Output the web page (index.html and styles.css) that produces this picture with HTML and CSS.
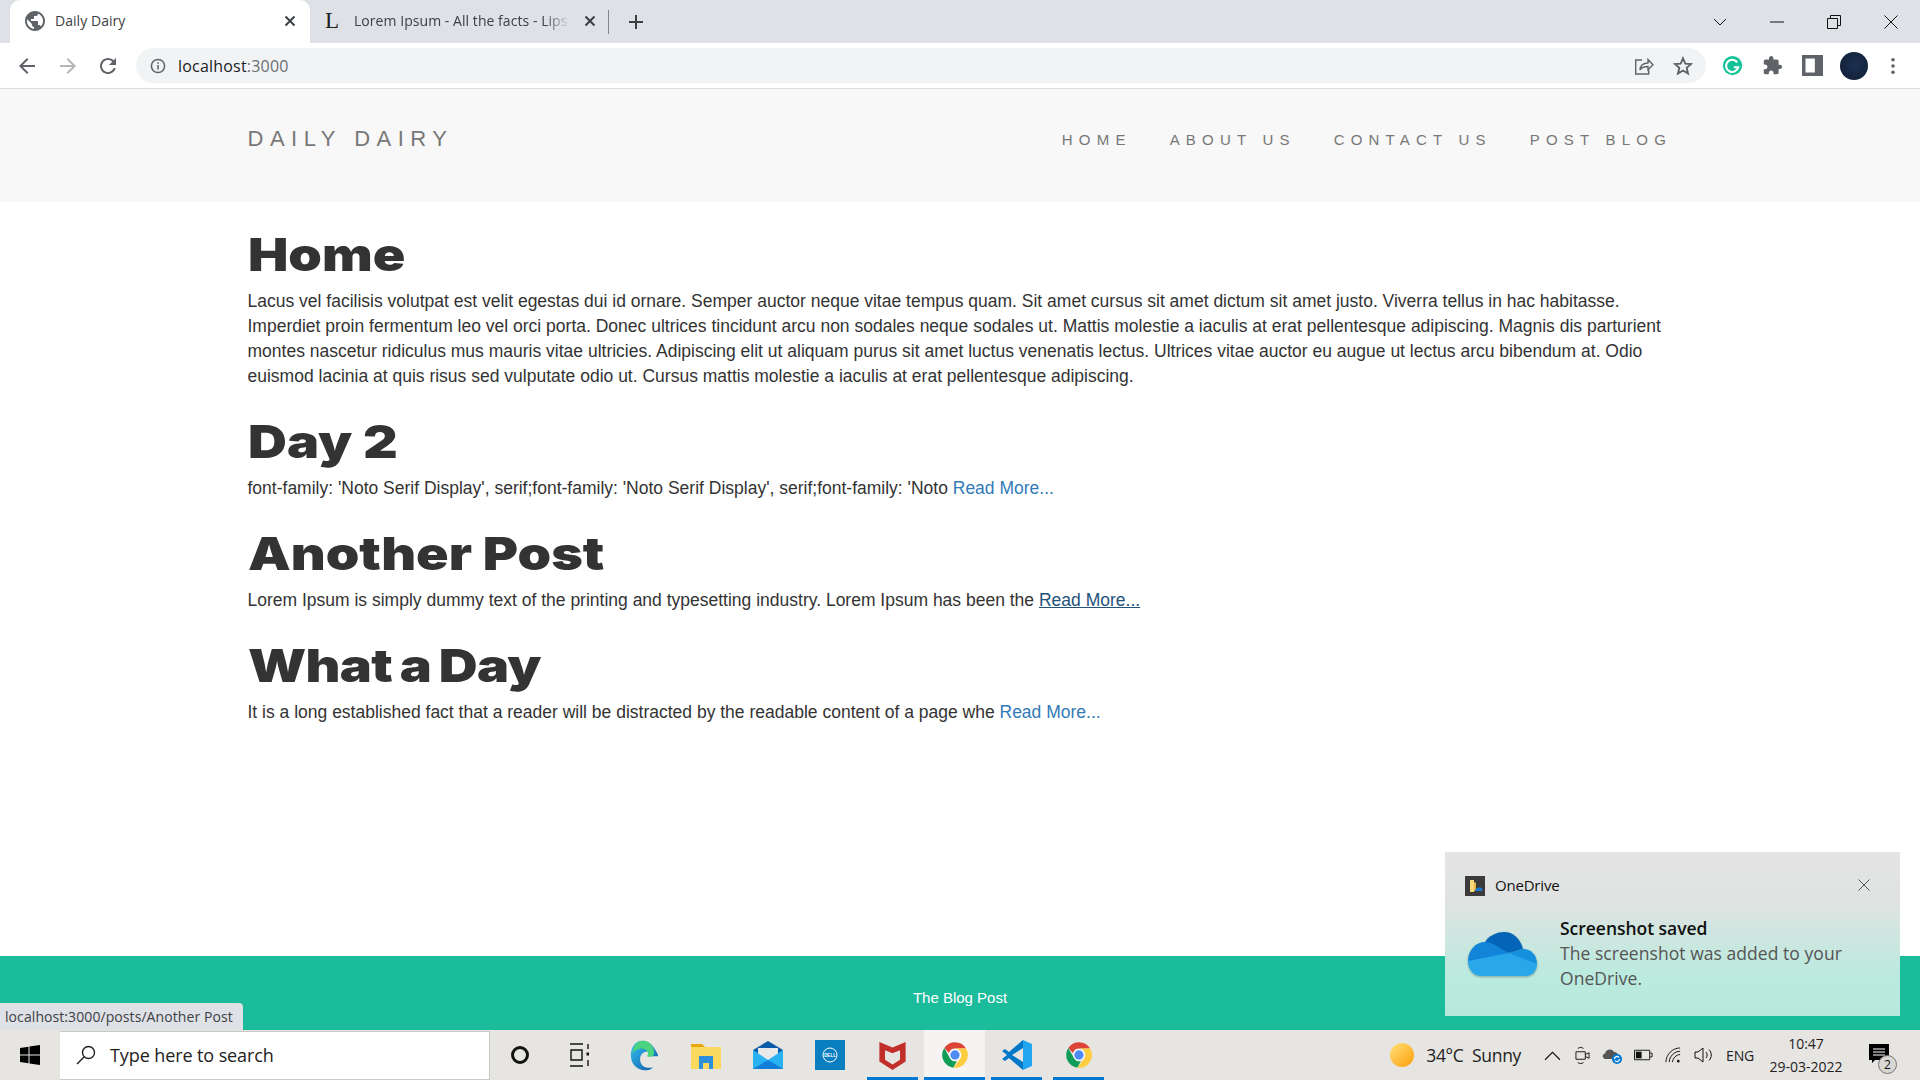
FILE: index.html

```html
<!DOCTYPE html>
<html lang="en">
<head>
  <meta charset="UTF-8">
  <title>Daily Dairy</title>
  <link rel="stylesheet" href="styles.css">
</head>
<body>
  <svg class="defs" width="0" height="0">
    <symbol id="chrome" viewBox="0 0 48 48">
      <path fill="#db4437" d="M24 2a22 22 0 0 1 19 11H24a11 11 0 0 0-10.400 7.400L5.600 12A22 22 0 0 1 24 2z"/>
      <path fill="#0f9d58" d="M5.600 12l9.500 16.500A11 11 0 0 0 27 34.600L21 45.800A22 22 0 0 1 5.600 12z"/>
      <path fill="#ffcd40" d="M43 13a22 22 0 0 1-22 32.800L33.500 29.500A11 11 0 0 0 24 13z"/>
      <circle cx="24" cy="24" r="10" fill="#fff"/>
      <circle cx="24" cy="24" r="8" fill="#4e8bf5"/>
    </symbol>
  </svg>

  <div class="tabstrip">
    <div class="tab tab-active">
      <svg class="tab-icon" viewBox="2 2 20 20"><path fill="#5f6368" d="M12 2C6.480 2 2 6.480 2 12s4.480 10 10 10 10-4.480 10-10S17.520 2 12 2zm-1 17.930c-3.950-.49-7-3.850-7-7.930 0-.62.08-1.210.21-1.790L9 15v1c0 1.100.9 2 2 2v1.930zm6.900-2.540c-.26-.81-1-1.390-1.900-1.390h-1v-3c0-.55-.45-1-1-1H8v-2h2c.55 0 1-.45 1-1V7h2c1.100 0 2-.9 2-2v-.41c2.930 1.190 5 4.060 5 7.410 0 2.080-.8 3.970-2.100 5.390z"/></svg>
      <span class="tab-title">Daily Dairy</span>
      <svg class="tab-close" viewBox="0 0 12 12"><path d="M1.500 1.500l9 9M10.500 1.500l-9 9"/></svg>
    </div>
    <div class="tab">
      <span class="tab-letter">L</span>
      <span class="tab-title tab-fade">Lorem Ipsum - All the facts - Lips</span>
      <svg class="tab-close" viewBox="0 0 12 12"><path d="M1.500 1.500l9 9M10.500 1.500l-9 9"/></svg>
    </div>
    <div class="tab-sep"></div>
    <svg class="tab-new" viewBox="0 0 16 16"><path d="M8 1v14M1 8h14"/></svg>
    <div class="window-controls">
      <svg viewBox="0 0 14 14" class="win-chevron"><path d="M1 4l6 6 6-6"/></svg>
      <svg viewBox="0 0 14 14" class="win-min"><path d="M0 7h14"/></svg>
      <svg viewBox="0 0 14 14" class="win-restore"><path d="M.5 3.500h10v10H.5zM3.500 3.500V.5h10v10h-3"/></svg>
      <svg viewBox="0 0 14 14" class="win-close"><path d="M.5.5l13 13M13.500.5l-13 13"/></svg>
    </div>
  </div>

  <div class="toolbar">
    <svg class="tool" viewBox="0 0 24 24"><path fill="#5f6368" d="M20 11H7.830l5.590-5.590L12 4l-8 8 8 8 1.410-1.410L7.830 13H20v-2z"/></svg>
    <svg class="tool" viewBox="0 0 24 24"><path fill="#b4b6b9" d="M20 11H7.830l5.590-5.590L12 4l-8 8 8 8 1.410-1.410L7.830 13H20v-2z" transform="matrix(-1 0 0 1 24 0)"/></svg>
    <svg class="tool" viewBox="0 0 24 24"><path fill="#5f6368" d="M17.650 6.350C16.200 4.900 14.210 4 12 4c-4.420 0-7.990 3.580-7.990 8s3.570 8 7.990 8c3.730 0 6.840-2.550 7.730-6h-2.080c-.82 2.330-3.040 4-5.650 4-3.310 0-6-2.690-6-6s2.690-6 6-6c1.660 0 3.140.69 4.220 1.780L13 11h7V4l-2.350 2.350z"/></svg>
    <div class="omnibox">
      <svg class="omni-info" viewBox="0 0 16 16"><circle cx="8" cy="8" r="6.600" fill="none" stroke="#5f6368" stroke-width="1.500"/><path stroke="#5f6368" stroke-width="1.600" d="M8 7v4.500M8 4.200v1.600"/></svg>
      <span class="omni-url">localhost<span class="omni-port">:3000</span></span>
      <svg class="omni-share" viewBox="0 0 20 20"><path fill="none" stroke="#5f6368" stroke-width="1.400" d="M8 4H1.700v14h13v-4M6 14c.3-4 3-7 8-7V3.500l5 5.300-5 5V10.500c-3.500 0-6.500 1-8 3.500z"/></svg>
      <svg class="omni-star" viewBox="0 0 20 20"><path fill="none" stroke="#5f6368" stroke-width="1.900" d="M10 2.300l2.300 5.300 5.700.5-4.300 3.800 1.300 5.600-5-3-5 3 1.300-5.600L2 8.100l5.700-.5z"/></svg>
    </div>
    <div class="ext-icons">
      <svg class="ext" viewBox="0 0 24 24"><circle cx="12" cy="12" r="11" fill="#15c39a"/><path fill="none" stroke="#fff" stroke-width="2.400" d="M17.500 8.500A7 7 0 1 0 18.500 14h-5"/></svg>
      <svg class="ext" viewBox="0 0 24 24"><path fill="#5f6368" d="M20.500 11H19V7c0-1.100-.9-2-2-2h-4V3.500C13 2.120 11.880 1 10.500 1S8 2.120 8 3.500V5H4c-1.100 0-1.990.9-1.990 2v3.800H3.500c1.490 0 2.700 1.210 2.700 2.700s-1.210 2.700-2.700 2.700H2V20c0 1.100.9 2 2 2h3.800v-1.500c0-1.490 1.210-2.700 2.700-2.700 1.490 0 2.700 1.210 2.700 2.700V22H17c1.100 0 2-.9 2-2v-4h1.500c1.380 0 2.500-1.120 2.500-2.500S21.880 11 20.500 11z"/></svg>
      <svg class="ext" viewBox="0 0 18 18"><path fill="#5f6368" fill-rule="evenodd" d="M0 0h18v18H0zM3 3v12h8V3z"/></svg>
      <div class="avatar"></div>
      <svg class="ext-dots" viewBox="0 0 6 20"><circle cx="3" cy="3" r="2"/><circle cx="3" cy="10" r="2"/><circle cx="3" cy="17" r="2"/></svg>
    </div>
  </div>

  <div class="page">
    <nav class="navbar">
      <a class="brand">DAILY DAIRY</a>
      <ul class="nav-links">
        <li>HOME</li>
        <li>ABOUT US</li>
        <li>CONTACT US</li>
        <li>POST BLOG</li>
      </ul>
    </nav>

    <main class="container">
      <h1>Home</h1>
      <p>Lacus vel facilisis volutpat est velit egestas dui id ornare. Semper auctor neque vitae tempus quam. Sit amet cursus sit amet dictum sit amet justo. Viverra tellus in hac habitasse. Imperdiet proin fermentum leo vel orci porta. Donec ultrices tincidunt arcu non sodales neque sodales ut. Mattis molestie a iaculis at erat pellentesque adipiscing. Magnis dis parturient montes nascetur ridiculus mus mauris vitae ultricies. Adipiscing elit ut aliquam purus sit amet luctus venenatis lectus. Ultrices vitae auctor eu augue ut lectus arcu bibendum at. Odio euismod lacinia at quis risus sed vulputate odio ut. Cursus mattis molestie a iaculis at erat pellentesque adipiscing.</p>

      <h1>Day 2</h1>
      <p>font-family: 'Noto Serif Display', serif;font-family: 'Noto Serif Display', serif;font-family: 'Noto <a>Read More...</a></p>

      <h1>Another Post</h1>
      <p>Lorem Ipsum is simply dummy text of the printing and typesetting industry. Lorem Ipsum has been the <a class="hovered">Read More...</a></p>

      <h1 class="tight">What a Day</h1>
      <p>It is a long established fact that a reader will be distracted by the readable content of a page whe <a>Read More...</a></p>
    </main>

    <footer class="footer">The Blog Post</footer>

    <div class="status-bubble">localhost:3000/posts/Another Post</div>

    <div class="toast">
      <div class="toast-head">
        <svg class="toast-app" viewBox="0 0 20 20"><rect width="20" height="20" fill="#3b3b3b"/><path fill="#f5d77a" d="M5 4h4v12H5z"/><path fill="#e8b94a" d="M9 6l2 1v8H9z"/><path fill="#1b78d0" d="M10 15c0-2 1.500-3 3-3 .8-1.300 3.500-1 4 1 1 .2 1 2-.2 2z"/></svg>
        <span class="toast-name">OneDrive</span>
        <svg class="toast-close" viewBox="0 0 12 12"><path d="M.5.5l11 11M11.500.5l-11 11"/></svg>
      </div>
      <div class="toast-body">
        <svg class="toast-cloud" viewBox="0 0 69 44">
          <path fill="#0364b8" d="M16 12C20 3 30 0 36 0c9 0 16 6 19 17L41 21z"/>
          <path fill="#1284da" d="M0 29C0 18 8 10 17 10c5 0 11 3 16 7l8 4L8 38z"/>
          <path fill="#1490df" d="M41 21l14-4c8 0 14 6 14 15L50 38z"/>
          <path fill="#28a8ea" d="M41 21l28 11c0 7-5 12-11 12H14C6 44 0 38 0 29z"/>
        </svg>
        <div class="toast-text">
          <div class="toast-title">Screenshot saved</div>
          <div class="toast-msg">The screenshot was added to your OneDrive.</div>
        </div>
      </div>
    </div>
  </div>

  <div class="taskbar">
    <svg class="tb-start" viewBox="0 0 20 20"><path fill="#000" d="M0 3l8.500-1.200V9.500H0zM9.500 1.600L20 0v9.500H9.500zM0 10.500h8.500v7.700L0 17zM9.500 10.500H20V20L9.500 18.400z"/></svg>
    <div class="tb-search">
      <svg class="tb-glass" viewBox="0 0 20 20"><circle cx="12.500" cy="7.500" r="6" fill="none" stroke="#222" stroke-width="1.400"/><path stroke="#222" stroke-width="1.400" d="M8 12l-7 7"/></svg>
      <span>Type here to search</span>
    </div>
    <div class="tb-slot tb-cortana"><span class="ring"></span></div>
    <div class="tb-slot tb-taskview">
      <svg viewBox="0 0 20 24" width="20" height="24"><path fill="none" stroke="#111" stroke-width="1.400" d="M1 1h13M1 23h13M2 7h11v10H2zM19 1v5M19 17v6"/><rect x="17.500" y="9.500" width="3" height="3" fill="#111"/></svg>
    </div>
    <div class="tb-slot tb-edge">
      <svg viewBox="0 0 32 40" width="31" height="31"><defs><linearGradient id="edgeA" x1="0" y1="0" x2="1" y2="1"><stop offset="0" stop-color="#35c1f1"/><stop offset="1" stop-color="#0c59a4"/></linearGradient></defs><path fill="url(#edgeA)" d="M16 1C7 1 1 9 1 20c0 11 8 19 18 19 4 0 8-1 11-4-6 2-16 1-17-9-1-7 5-12 11-11 4 1 5 4 4 6h9C31 8 25 1 16 1z"/><path fill="#4bd37f" d="M16 1c9 0 15 7 15 16 0 4-5 6-9 4 3-5-1-10-7-10C10 11 5 14 3 18 4 8 9 1 16 1z"/></svg>
    </div>
    <div class="tb-slot tb-files">
      <svg viewBox="0 0 30 28" width="30" height="28"><path fill="#e8a70f" d="M0 3h11l3 3H0z"/><path fill="#fbd95e" d="M0 6h30v22H0z"/><path fill="#2d8fdc" d="M8 15h14v13h-4v-6h-6v6H8z"/></svg>
    </div>
    <div class="tb-slot tb-mail">
      <svg viewBox="0 0 30 28" width="30" height="28"><path fill="#0a5ca8" d="M15 0l15 9v4H0V9z"/><path fill="#e9e9e9" d="M5 7h20v8l-10 6-10-6z"/><path fill="#29b2f2" d="M0 9l15 10 15-10v19H0z"/><path fill="#0f7fd8" d="M0 28l15-9 15 9z"/></svg>
    </div>
    <div class="tb-slot tb-dell">
      <svg viewBox="0 0 30 30" width="30" height="30"><rect width="30" height="30" fill="#0a7fbf"/><circle cx="15" cy="15" r="7" fill="none" stroke="#fff"/><text x="15" y="16.700" text-anchor="middle" class="dell-word">DELL</text></svg>
    </div>
    <div class="tb-slot tb-mcafee tb-open">
      <svg viewBox="0 0 28 32" width="27" height="30"><path fill="#c22f2b" fill-rule="evenodd" d="M0 2l14 6 14-6v21l-14 9-14-9zM6 11v10l8 5 8-5V11l-8 3z"/></svg>
    </div>
    <div class="tb-slot tb-chrome tb-open tb-active"><svg class="tb-chrome-icon"><use href="#chrome"/></svg></div>
    <div class="tb-slot tb-code tb-open">
      <svg viewBox="0 0 30 30" width="30" height="30"><path fill="#22a5f1" d="M21 0l9 4v22l-9 4z"/><path fill="#0078c8" d="M21 0v8L10 15l11 7v8L7 18l-4 3-3-2 5-4-5-4 3-2 4 3z"/></svg>
    </div>
    <div class="tb-slot tb-chrome2 tb-open"><svg class="tb-chrome-icon"><use href="#chrome"/></svg></div>

    <div class="tray">
      <span class="sun"></span>
      <span class="weather">34°C&nbsp; Sunny</span>
      <svg class="tray-icon tray-caret" viewBox="0 0 16 10"><path d="M1 9l7-7 7 7"/></svg>
      <svg class="tray-icon tray-meet" viewBox="0 0 16 20"><path d="M1 6h10v8H1zM11 9l4-2v6l-4-2M3 2.500c2-1.500 4-1.500 6 0M3 17.500c2 1.500 4 1.500 6 0"/></svg>
      <svg class="tray-icon tray-cloud" viewBox="0 0 20 18"><path fill="#555" stroke="none" d="M3 13C0 12 0 8 3 7.500 4 3 10 2 12 6c3 0 4 2 4 3-3 0-5 2-5 4z"/><circle cx="15" cy="13" r="5" fill="#0078d4" stroke="none"/><path stroke="#fff" stroke-width="1.200" d="M12.500 13a2.500 2.500 0 0 1 4.500-1.500M17.500 13a2.500 2.500 0 0 1-4.500 1.500"/></svg>
      <svg class="tray-icon tray-battery" viewBox="0 0 20 12"><path d="M.5 1h16v10H.5zM17 4h2v4h-2"/><rect x="2" y="2.500" width="6" height="7" fill="#111" stroke="none"/></svg>
      <svg class="tray-icon tray-wifi" viewBox="0 0 18 18"><path d="M1 16C1 8 8 1 16 1M4.500 16c0-6 5.500-11.500 11.500-11.500M8 16c0-4 4-8 8-8"/><circle cx="14" cy="15" r="1.400" fill="#111" stroke="none"/></svg>
      <svg class="tray-icon tray-vol" viewBox="0 0 20 18"><path d="M1 6h3l5-4v14l-5-4H1zM12 6c1.500 2 1.500 4 0 6M15 3.500c3 3 3 8 0 11"/></svg>
      <span class="tray-lang">ENG</span>
      <div class="clock"><div>10:47</div><div>29-03-2022</div></div>
      <div class="notif">
        <svg viewBox="0 0 20 20" width="20" height="20"><path fill="#000" d="M0 0h20v16H6l-3 3v-3H0z"/><path stroke="#fff" d="M4 5h12M4 8h12M4 11h12"/></svg>
        <span class="notif-count">2</span>
      </div>
    </div>
  </div>
</body>
</html>
```

FILE: styles.css

```css
html, body {
  margin: 0;
  height: 100%;
}
body {
  width: 1920px;
  height: 1080px;
  display: flex;
  flex-direction: column;
  overflow: hidden;
  font-family: "Liberation Sans", Arial, sans-serif;
  color: #333;
  background-color: #fff;
}
.defs {
  display: none;
}

/* browser chrome */
.tabstrip {
  flex: 0 0 43px;
  display: flex;
  align-items: center;
  padding-left: 10px;
  background-color: #dee1e6;
  font-family: "Open Sans", sans-serif;
  font-size: 14px;
  color: #3c4043;
}
.tab {
  width: 300px;
  height: 43px;
  box-sizing: border-box;
  padding: 0 14px 2px 15px;
  display: flex;
  align-items: center;
}
.tab-active {
  background-color: #fff;
  border-radius: 10px 10px 0 0;
}
.tab-icon {
  width: 20px;
  height: 20px;
  margin-right: 10px;
  flex: none;
}
.tab-letter {
  width: 19px;
  margin-right: 10px;
  flex: none;
  font-family: "Liberation Serif", serif;
  font-size: 23px;
  color: #222;
}
.tab-title {
  flex: 1;
  white-space: nowrap;
  overflow: hidden;
  letter-spacing: 0.05px;
}
.tab-fade {
  -webkit-mask-image: linear-gradient(to right, #000 88%, transparent 100%);
  mask-image: linear-gradient(to right, #000 88%, transparent 100%);
}
.tab-close {
  width: 12px;
  height: 12px;
  flex: none;
  margin-left: 14px;
  fill: none;
  stroke: #3c4043;
  stroke-width: 2;
}
.tab-sep {
  width: 1px;
  height: 24px;
  margin-left: -2px;
  background-color: #80868b;
}
.tab-new {
  width: 16px;
  height: 16px;
  margin-left: 19px;
  fill: none;
  stroke: #3c4043;
  stroke-width: 2;
}
.window-controls {
  margin-left: auto;
  display: flex;
  align-items: center;
  gap: 43px;
  padding-right: 22px;
}
.window-controls svg {
  width: 14px;
  height: 14px;
  fill: none;
  stroke: #111;
  stroke-width: 1;
}
.toolbar {
  flex: 0 0 46px;
  box-sizing: border-box;
  display: flex;
  align-items: center;
  padding-left: 15px;
  background-color: #fff;
  border-bottom: 1px solid #dadce0;
}
.tool {
  width: 24px;
  height: 24px;
  margin-right: 16.500px;
}
.omnibox {
  width: 1570px;
  height: 35px;
  margin-left: -.500px;
  display: flex;
  align-items: center;
  padding-left: 14px;
  box-sizing: border-box;
  border-radius: 18px;
  background-color: #f1f3f4;
  font-family: "Open Sans", sans-serif;
  font-size: 16px;
  color: #202124;
}
.omni-info {
  width: 16px;
  height: 16px;
  margin-right: 12px;
}
.omni-url {
  letter-spacing: 0.2px;
}
.omni-port {
  color: #6b6e72;
}
.omni-share {
  width: 20px;
  height: 20px;
  margin-left: auto;
}
.omni-star {
  width: 20px;
  height: 20px;
  margin: 0 13px 0 19px;
}
.ext-icons {
  display: flex;
  align-items: center;
  margin-left: 16px;
}
.ext {
  width: 21px;
  height: 21px;
  margin-right: 19px;
}
.avatar {
  width: 28px;
  height: 28px;
  margin-left: -2px;
  border-radius: 50%;
  background: radial-gradient(circle at 55% 45%, #1c3153, #101b30);
}
.ext-dots {
  width: 6px;
  height: 18px;
  margin-left: 22px;
  fill: #5f6368;
}

/* page */
.page {
  flex: 1;
  position: relative;
  display: flex;
  flex-direction: column;
}
.navbar {
  flex: 0 0 113px;
  box-sizing: border-box;
  display: flex;
  align-items: center;
  justify-content: space-between;
  padding: 0 248px 12px 247.500px;
  background-color: #f8f8f8;
  color: #777;
}
.brand {
  font-size: 22px;
  letter-spacing: 6.500px;
  margin-bottom: 1px;
}
.nav-links {
  list-style: none;
  margin: 0;
  padding: 0;
  display: flex;
  gap: 38px;
  font-size: 15px;
  letter-spacing: 6.200px;
}
.container {
  flex: 1;
  padding: 0 248px 0 247.500px;
}
h1 {
  margin: 27px 0 10px;
  font-family: Inter, "Liberation Sans", sans-serif;
  font-size: 46px;
  font-weight: 900;
  line-height: 50px;
  color: #333;
  transform: scaleX(1.170);
  transform-origin: left center;
}
h1.tight {
  word-spacing: -2px;
  letter-spacing: -0.6px;
}
p {
  margin: 0;
  font-size: 17.500px;
  line-height: 25px;
}
p a {
  color: #337ab7;
}
p a.hovered {
  color: #23527c;
  text-decoration: underline;
}
.footer {
  flex: 0 0 74px;
  box-sizing: border-box;
  padding-top: 33px;
  text-align: center;
  font-size: 15px;
  color: #fff;
  background-color: #1abc9c;
}
.status-bubble {
  position: absolute;
  left: 0;
  bottom: 0;
  width: 243px;
  height: 27px;
  box-sizing: border-box;
  padding: 4px 0 0 5px;
  border-radius: 0 4px 0 0;
  background-color: #dee1e6;
  font-family: "Open Sans", sans-serif;
  font-size: 14px;
  letter-spacing: 0.08px;
  color: #3c4043;
  white-space: nowrap;
}

/* onedrive notification */
.toast {
  position: absolute;
  left: 1445px;
  top: 763px;
  width: 455px;
  height: 164px;
  box-sizing: border-box;
  padding: 24px 20px 0;
  background: linear-gradient(to bottom, #e4e4e4 0%, #e0e3e2 30%, #bbeade 75%, #b8e8dc 100%);
  font-family: "Open Sans", sans-serif;
  color: #111;
}
.toast-head {
  display: flex;
  align-items: center;
  height: 20px;
  font-size: 15px;
  letter-spacing: -0.2px;
}
.toast-app {
  width: 20px;
  height: 20px;
  margin-right: 10px;
}
.toast-name {
  padding-bottom: 2px;
}
.toast-close {
  width: 12px;
  height: 12px;
  margin: 0 10px 2px auto;
  fill: none;
  stroke: #555;
  stroke-width: 1;
}
.toast-body {
  display: flex;
  margin-top: 20px;
}
.toast-cloud {
  width: 69px;
  height: 44px;
  margin: 16px 23px 0 3px;
  flex: none;
  filter: drop-shadow(0 1px 1px rgba(0, 0, 0, 0.3));
}
.toast-title {
  font-size: 17.500px;
  font-weight: 600;
  line-height: 25px;
  letter-spacing: -0.03px;
}
.toast-msg {
  width: 330px;
  font-size: 17.500px;
  line-height: 25px;
  letter-spacing: 0.05px;
  color: #555;
}

/* windows taskbar */
.taskbar {
  flex: 0 0 50px;
  display: flex;
  align-items: center;
  background-color: #e7e5e1;
  font-family: "Open Sans", sans-serif;
}
.tb-start {
  width: 20px;
  height: 20px;
  margin: 0 20px;
  flex: none;
}
.tb-search {
  width: 430px;
  height: 49px;
  box-sizing: border-box;
  display: flex;
  align-items: center;
  padding-left: 16px;
  background-color: #fff;
  border: 1px solid #c9c9c9;
  border-width: 1px 1px 1px 0;
  font-size: 18px;
  letter-spacing: -0.1px;
  color: #222;
}
.tb-glass {
  width: 20px;
  height: 20px;
  margin-right: 14px;
}
.tb-slot {
  height: 50px;
  box-sizing: border-box;
  display: flex;
  align-items: center;
  justify-content: center;
  flex: none;
}
.tb-cortana { width: 60px; }
.tb-taskview { width: 58px; }
.tb-edge { width: 68px; margin-right: 2px; }
.tb-files { width: 55px; }
.tb-mail { width: 70px; }
.tb-dell { width: 54px; }
.tb-mcafee { width: 51px; margin-left: 10px; }
.tb-chrome { width: 61px; margin-left: 6px; }
.tb-code { width: 51px; margin-left: 6px; }
.tb-chrome2 { width: 51px; margin-left: 11px; }
.tb-open {
  border-bottom: 3px solid #0078d4;
  padding-top: 3px;
}
.tb-active {
  background-color: #f5f4f2;
}
.tb-chrome-icon {
  width: 28px;
  height: 28px;
}
.ring {
  width: 12px;
  height: 12px;
  border: 3px solid #111;
  border-radius: 50%;
}
.dell-word {
  font-family: "Liberation Sans", sans-serif;
  font-size: 4.500px;
  font-weight: bold;
  fill: #fff;
}
.tray {
  margin-left: auto;
  display: flex;
  align-items: center;
  padding-right: 29px;
  font-size: 16px;
  color: #222;
}
.sun {
  width: 24px;
  height: 24px;
  margin-right: 12px;
  border-radius: 50%;
  background: linear-gradient(135deg, #ffe27a, #ff9d0a);
}
.weather {
  font-size: 17.500px;
  letter-spacing: -0.3px;
  margin-right: 23px;
}
.tray-icon {
  fill: none;
  stroke: #111;
  stroke-width: 1;
  margin-right: 12px;
}
.tray-caret { width: 17px; height: 11px; margin-right: 14px; }
.tray-meet { width: 15px; height: 19px; }
.tray-cloud { width: 20px; height: 18px; }
.tray-battery { width: 19px; height: 12px; }
.tray-wifi { width: 17px; height: 17px; }
.tray-vol { width: 20px; height: 18px; margin-right: 12px; }
.tray-lang {
  font-size: 14px;
  letter-spacing: -0.2px;
  margin-right: 13px;
}
.clock {
  width: 78px;
  text-align: center;
  font-size: 14px;
  letter-spacing: 0;
  line-height: 23px;
  white-space: nowrap;
}
.notif {
  position: relative;
  width: 22px;
  height: 22px;
  margin-left: 24px;
}
.notif-count {
  position: absolute;
  right: -6px;
  bottom: -8px;
  width: 19px;
  height: 19px;
  box-sizing: border-box;
  border: 1px solid #777;
  border-radius: 50%;
  background-color: #d8d7d4;
  text-align: center;
  font-size: 12px;
  line-height: 17px;
  color: #111;
}
```
